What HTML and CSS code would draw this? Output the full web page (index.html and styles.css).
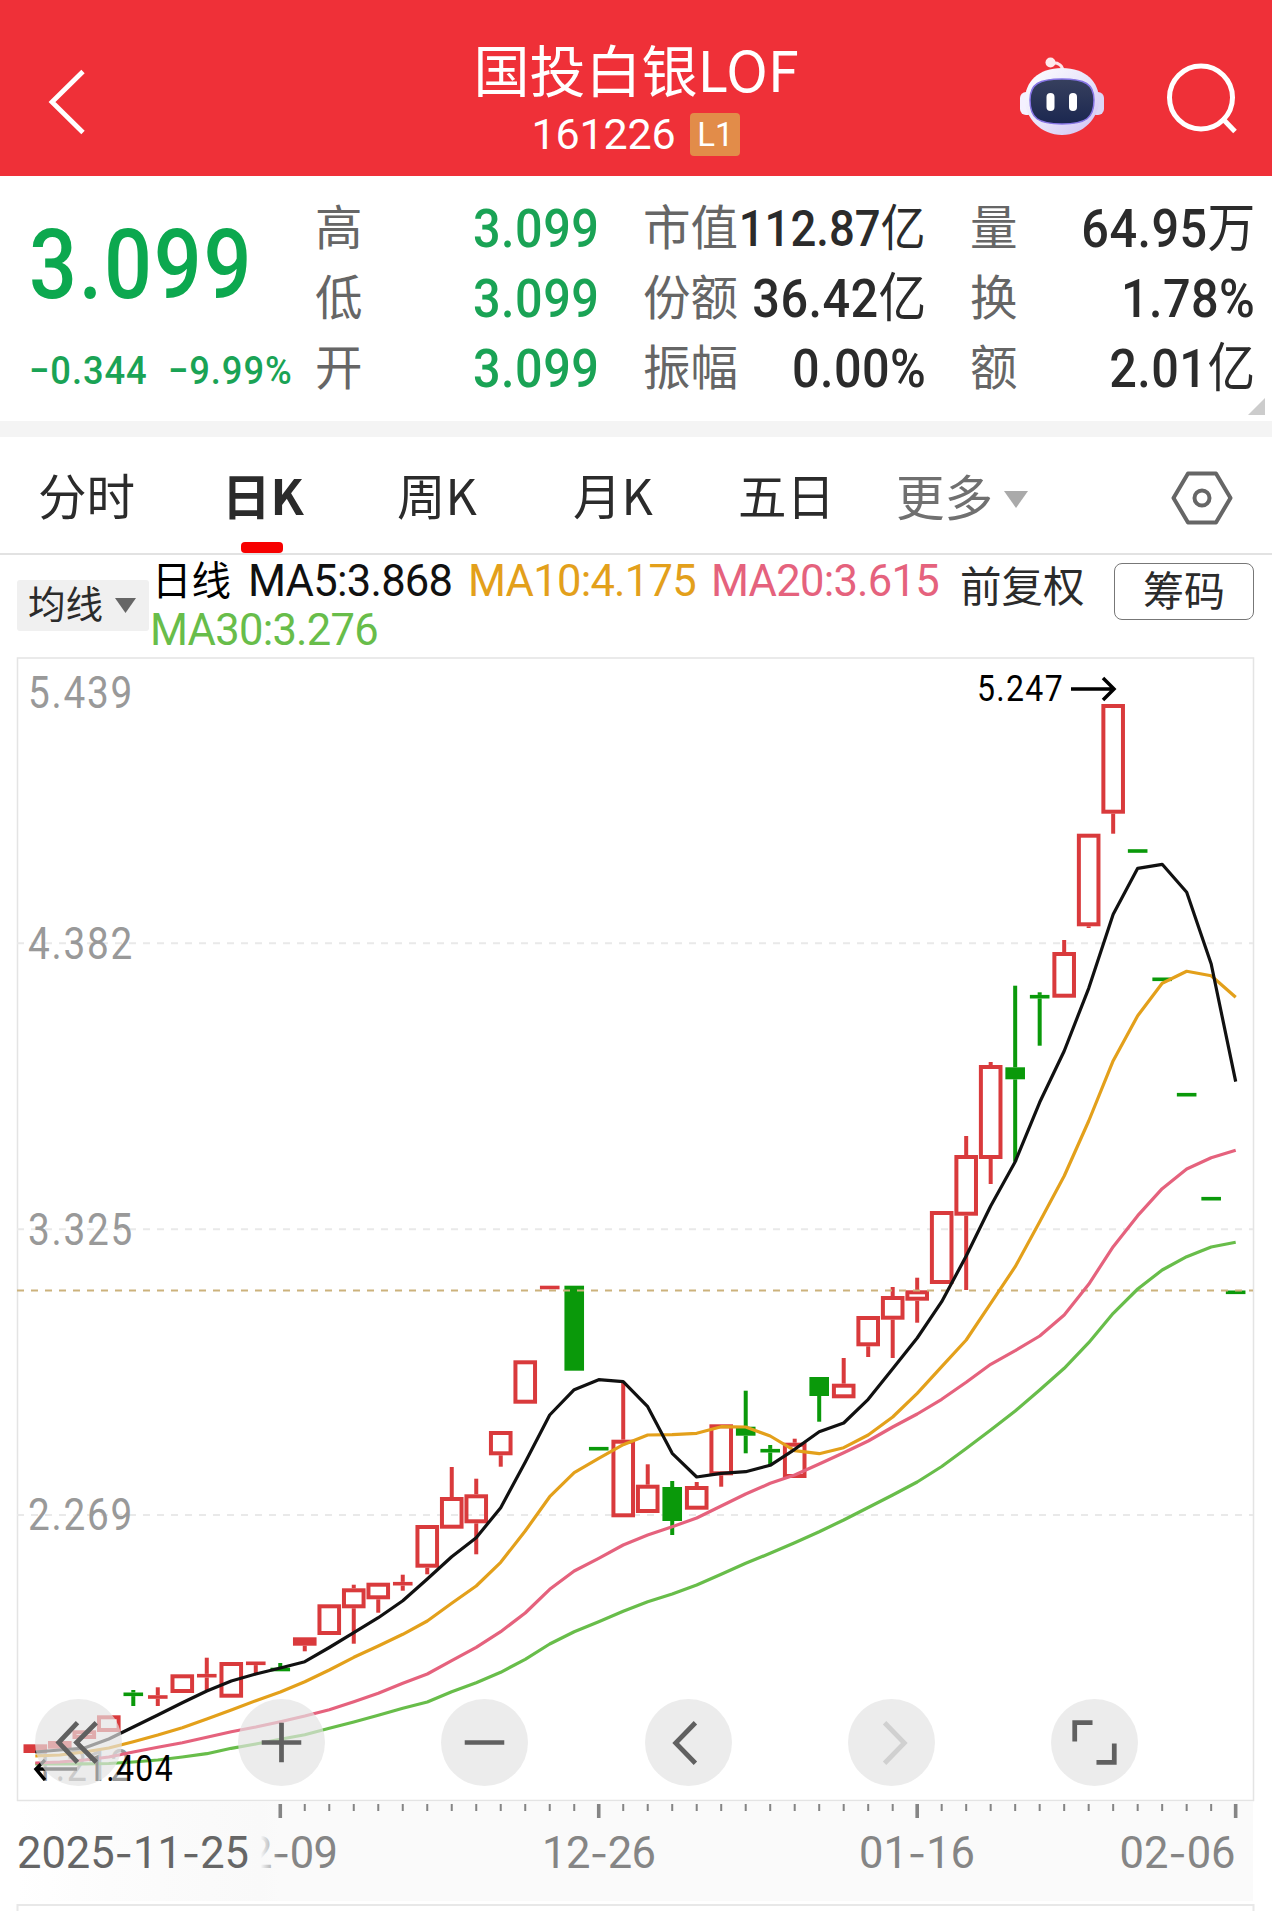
FILE: index.html
```html
<!DOCTYPE html>
<html lang="zh-CN">
<head>
<meta charset="utf-8">
<title>国投白银LOF 161226</title>
<link rel="stylesheet" href="styles.css">
</head>
<body>
<header class="header">
  <svg class="back" width="60" height="80" viewBox="0 0 60 80"><path d="M43 11.500 12 42 43 72.500" fill="none" stroke="#fff" stroke-width="4.800"/></svg>
  <div class="heading">
    <h1 class="title">国投白银LOF</h1>
    <div class="code-row"><span class="code">161226</span><span class="badge">L1</span></div>
  </div>
  <div class="header-icons">
    <svg width="88" height="84" viewBox="0 0 88 84">
      <defs>
        <linearGradient id="shell" x1="0" y1="0" x2="1" y2="1"><stop offset="0" stop-color="#fff"/><stop offset=".55" stop-color="#e6e2fa"/><stop offset="1" stop-color="#cfc0f4"/></linearGradient>
        <linearGradient id="visor" x1="0" y1="0" x2="0" y2="1"><stop offset="0" stop-color="#37405e"/><stop offset="1" stop-color="#1b2750"/></linearGradient>
      </defs>
      <path d="M33 9c8-1 12 3 12 9" fill="none" stroke="#ffe3e8" stroke-width="3"/>
      <circle cx="32.500" cy="8.500" r="5" fill="#ffe9ec"/>
      <rect x="2" y="38" width="14" height="23" rx="6" fill="#f4f1ff"/><rect x="72" y="38" width="14" height="23" rx="6" fill="#dcd6f6"/>
      <path d="M44 14c24 0 37 14 37 32S65 81 44 81 7 64 7 46s13-32 37-32z" fill="url(#shell)"/>
      <path d="M44 25c23 0 32 5 32 21 0 18-8 24-32 24S12 64 12 46c0-16 9-21 32-21z" fill="url(#visor)" stroke="#8775e6" stroke-width="1.500"/>
      <rect x="28.500" y="39" width="8" height="18" rx="4" fill="#fff"/><rect x="51" y="39" width="8" height="18" rx="4" fill="#fff"/>
    </svg>
    <svg width="76" height="76" viewBox="0 0 76 76"><circle cx="37" cy="35.500" r="31.500" fill="none" stroke="#fff" stroke-width="5"/><path d="M58 56l13 13.500" stroke="#fff" stroke-width="5"/></svg>
  </div>
</header>

<section class="quote">
  <div class="price-col">
    <div class="price">3.099</div>
    <div class="change"><span>−0.344</span><span>−9.99%</span></div>
  </div>
  <dl class="stats hi"><dt>高</dt><dd>3.099</dd><dt>低</dt><dd>3.099</dd><dt>开</dt><dd>3.099</dd></dl>
  <dl class="stats cap"><dt>市值</dt><dd class="tight">112.87<i>亿</i></dd><dt>份额</dt><dd>36.42<i>亿</i></dd><dt>振幅</dt><dd>0.00%</dd></dl>
  <dl class="stats vol"><dt>量</dt><dd>64.95<i>万</i></dd><dt>换</dt><dd>1.78%</dd><dt>额</dt><dd>2.01<i>亿</i></dd></dl>
  <svg class="corner" width="17" height="17" viewBox="0 0 17 17"><path d="M17 0v17H0z" fill="#ccc"/></svg>
</section>

<nav class="tabs">
  <span class="tab t1">分时</span>
  <span class="tab t2 active">日K</span>
  <span class="tab t3">周K</span>
  <span class="tab t4">月K</span>
  <span class="tab t5">五日</span>
  <span class="tab more">更多<svg width="24" height="17" viewBox="0 0 24 17"><path d="M0 0h24L12 17z" fill="#aaa"/></svg></span>
  <svg class="gear" width="62" height="56" viewBox="0 0 62 56"><path d="M17 3.500h28L59.500 28 45 52.500H17L2.500 28z" fill="none" stroke="#666" stroke-width="4" stroke-linejoin="round"/><circle cx="31" cy="28" r="7.500" fill="none" stroke="#666" stroke-width="4"/></svg>
</nav>

<section class="legend">
  <div class="ma-select">均线<svg width="21" height="15" viewBox="0 0 21 15"><path d="M0 0h21L10.500 15z" fill="#666"/></svg></div>
  <div class="ma-values">
    <span class="day">日线</span><span class="m5">MA5:3.868</span><span class="m10">MA10:4.175</span><span class="m20">MA20:3.615</span>
    <span class="m30">MA30:3.276</span>
  </div>
  <span class="adjust">前复权</span>
  <span class="chips">筹码</span>
</section>

<main class="chart">
  <svg width="1272" height="1254" viewBox="0 657 1272 1254">
    <defs>
      <linearGradient id="fade" x1="0" x2="1" y1="0" y2="0"><stop offset="0" stop-color="#fff"/><stop offset=".35" stop-color="#fcfcfc"/><stop offset=".93" stop-color="#f9f9f9"/><stop offset="1" stop-color="#f9f9f9" stop-opacity="0"/></linearGradient>
    </defs>
    <g fill="none" stroke="#e4e4e4" stroke-width="1.500">
      <path d="M17.500 1800.500V658h1236v1142.500z"/>
    </g>
    <g stroke="#e9e9e9" stroke-width="2" stroke-dasharray="7 7"><path d="M17 943.300H1253M17 1229.300H1253M17 1515H1253"/></g>
    <g class="axis-price">
      <text x="28" y="707.500" textLength="106" lengthAdjust="spacingAndGlyphs">5.439</text>
      <text x="28" y="958.500" textLength="106" lengthAdjust="spacingAndGlyphs">4.382</text>
      <text x="28" y="1244.500" textLength="106" lengthAdjust="spacingAndGlyphs">3.325</text>
      <text x="28" y="1529.500" textLength="106" lengthAdjust="spacingAndGlyphs">2.269</text>
      <text x="34" y="1781" textLength="98" lengthAdjust="spacingAndGlyphs">1.212</text>
    </g>
    <g id="candles"></g>
    <path d="M17 1290.500H1253" stroke="#ccb27c" stroke-width="2.200" stroke-dasharray="7 7"/>
    <g id="averages" fill="none" stroke-width="3.200" stroke-linejoin="round"></g>
    <g class="marks">
      <text x="977" y="701" textLength="87" lengthAdjust="spacingAndGlyphs">5.247</text>
      <path d="M1071 689h43M1103 678l11 11-11 11"/>
      <text x="87" y="1781" textLength="87" lengthAdjust="spacingAndGlyphs">1.404</text>
      <path d="M77 1769H36M45 1760l-9 9 9 11"/>
    </g>
    <rect x="17" y="1802" width="1236" height="99" fill="#fafafa"/>
    <g id="ticks" fill="#858585"></g>
    <g class="dates">
      <text x="224" y="1867.500" textLength="114">12<tspan class="dash">-</tspan>09</text>
      <text x="542" y="1867.500" textLength="114">12<tspan class="dash">-</tspan>26</text>
      <text x="859" y="1867.500" textLength="116">01<tspan class="dash">-</tspan>16</text>
      <text x="1119.500" y="1867.500" textLength="116">02<tspan class="dash">-</tspan>06</text>
      <rect x="17" y="1802" width="262" height="99" fill="url(#fade)"/>
      <text class="start" x="17" y="1867.500" textLength="232">2025<tspan class="dash">-</tspan>11<tspan class="dash">-</tspan>25</text>
    </g>
    <path d="M17.500 1911V1905H1253.500V1911" fill="none" stroke="#e8e8e8" stroke-width="2"/>
  </svg>
  <div class="controls">
    <span class="ctl"><svg viewBox="0 0 88 88"><path d="M43 24 24 44l19 20M62 24 42 44l20 20"/></svg></span>
    <span class="ctl"><svg viewBox="0 0 88 88"><path d="M24 44h40M44 24v40"/></svg></span>
    <span class="ctl"><svg viewBox="0 0 88 88"><path d="M24 44h40"/></svg></span>
    <span class="ctl"><svg viewBox="0 0 88 88"><path d="M51 24 31 44.500 51 65"/></svg></span>
    <span class="ctl off"><svg viewBox="0 0 88 88"><path d="M37 24 57 44.500 37 65"/></svg></span>
    <span class="ctl"><svg viewBox="0 0 88 88"><path d="M42 24H24v19M46 64h18V45"/></svg></span>
  </div>
</main>
<script src="chart.js"></script>
</body>
</html>
```
FILE: styles.css
```css
* { box-sizing: border-box; margin: 0; padding: 0; }
body { width: 1272px; background: #fff; font-family: Roboto, "Noto Sans CJK SC", sans-serif; color: #2b2b2b; overflow: hidden; }
svg { display: block; flex: none; }

.header { height: 176px; background: #ef3038; color: #fff; display: grid; grid-template-columns: 300px 1fr 300px; }
.back { margin: 60px 0 0 40px; }
.heading { display: flex; flex-direction: column; align-items: center; padding-top: 34px; }
.title { font: 400 56px/68px "Noto Sans CJK SC", sans-serif; white-space: nowrap; }
.code-row { display: flex; align-items: center; gap: 15px; margin-top: 10px; height: 44px; }
.code { font-size: 43px; line-height: 44px; letter-spacing: -.2px; }
.badge { width: 50px; height: 43px; border-radius: 4px; background: #e28c49; font-size: 33px; line-height: 43px; text-align: center; }
.header-icons { display: flex; padding-left: 46px; gap: 58px; }
.header-icons svg:first-child { margin-top: 54px; }
.header-icons svg:last-child { margin-top: 62px; }

.quote { position: relative; height: 245px; display: flex; padding: 18px 0 0 29px; }
.price-col { width: 286px; color: #0ca84f; font-weight: 500; }
.price { font-size: 96px; line-height: 110px; letter-spacing: 2px; margin-top: 16px; width: 250px; transform: scaleX(.88); transform-origin: left; }
.change { display: flex; gap: 22px; width: 290px; font-size: 39.500px; line-height: 46px; letter-spacing: 1px; margin-top: 28px; color: #1aa355; white-space: nowrap; transform: scaleX(.92); transform-origin: left; }
.stats { display: grid; grid-template-columns: auto minmax(0, 1fr); grid-auto-rows: 70px; align-items: center; line-height: 70px; white-space: nowrap; }
.stats dt { font-size: 47.500px; color: #666; }
.stats dd { justify-self: end; font-size: 54px; font-weight: 500; letter-spacing: .5px; transform: scaleX(.9); transform-origin: right; }
.stats dd i { font-style: normal; font-weight: 400; font-size: 53px; letter-spacing: 0; }
.stats .tight { font-size: 50.500px; letter-spacing: 0; }
.stats .tight i { font-size: 50px; }
.hi { width: 284px; }
.hi dd { color: #1aa355; }
.cap { width: 283px; margin-left: 44px; }
.vol { width: 285px; margin-left: 44px; }
.corner { position: absolute; right: 7px; bottom: 6px; }

.tabs { height: 134px; border-top: 16px solid #f4f4f4; border-bottom: 2px solid #e2e2e2; display: flex; align-items: center; font-size: 48.500px; line-height: 115px; padding-left: 38px; white-space: nowrap; font-family: "Noto Sans CJK SC", sans-serif; }
.tab { position: relative; height: 116px; }
.t1 { width: 184px; }
.t2 { width: 175px; }
.t3 { width: 176px; }
.t4 { width: 165px; }
.t5 { width: 158px; }
.active { font-weight: 700; }
.active::after { content: ""; position: absolute; left: 19px; bottom: 0; width: 42px; height: 11px; border-radius: 4px; background: #f70000; }
.more { color: #707070; display: flex; align-items: center; gap: 11px; width: 275px; }
.more svg { margin-top: 9px; }
.gear { margin-top: 6px; }

.legend { height: 102px; display: flex; padding-left: 17px; white-space: nowrap; }
.ma-select { width: 132px; height: 51px; margin-top: 25px; background: #f0f0f0; border-radius: 3px; display: flex; align-items: center; gap: 12px; padding-left: 11px; font-size: 37.500px; line-height: 51px; }
.ma-values { width: 811px; display: flex; flex-wrap: wrap; align-content: flex-start; font-size: 43.500px; line-height: 49px; letter-spacing: -.75px; padding: 2px 0 0 1px; }
.day { width: 98px; padding-left: 2px; font-size: 39.500px; letter-spacing: 0; color: #000; }
.m5 { width: 220px; color: #111; }
.m10 { width: 243px; color: #e3a01b; }
.m20 { width: 232px; color: #e5627d; }
.m30 { color: #68bd4a; }
.adjust { width: 154px; font-size: 41.500px; line-height: 66px; }
.chips { width: 140px; height: 57px; margin-top: 8px; border: 1.500px solid #777; border-radius: 8px; text-align: center; font-size: 41px; line-height: 56px; }

.chart { position: relative; height: 1254px; }
.chart text { font-family: Roboto, sans-serif; }
.axis-price text { font-size: 44.500px; letter-spacing: 2px; fill: #999; }
.marks text { font-size: 36.500px; letter-spacing: 1.500px; fill: #000; }
.marks path { fill: none; stroke: #000; stroke-width: 3.500; }
.dates text { font-size: 43.500px; fill: #858585; }
.dates .start { fill: #666; }
.dates .dash { font-family: Inter, sans-serif; font-size: 40px; }
.controls { position: absolute; left: 35px; top: 1042px; width: 1103px; display: flex; justify-content: space-between; }
.ctl { width: 87px; height: 87px; border-radius: 50%; background: rgba(227, 227, 227, .68); }
.ctl path { fill: none; stroke: #606060; stroke-width: 4.800; }
.off path { stroke: #d0d0d0; }
```
FILE: chart.js
```js
const NS = 'http://www.w3.org/2000/svg';
const STEP = 24.497;
const xAt = i => 35.3 + STEP * i;
const add = (id, name, attrs) => {
  const el = document.createElementNS(NS, name);
  for (const k in attrs) el.setAttribute(k, attrs[k]);
  document.getElementById(id).appendChild(el);
};

// kind (r: hollow up, s: solid up, l: flat up, g: down, d: flat down), body top, body bottom, high, low
const candles = [
  ['s',1744.3,1753],['s',1741,1748.7],['r',1730.3,1739],['r',1715.3,1732],
  ['d',1694.3,0,1690,1706],['l',1697,0,1687.3,1706],['r',1674.3,1693],['l',1675.7,0,1657.7,1690],
  ['r',1662,1697.7],['l',1663.3,0,1663,1674],['d',1669.5,0,1663,1671],['s',1637.3,1645.7,0,1651.3],
  ['r',1604.3,1635],['r',1588.3,1608.3,1584.7,1643.7],['r',1582.7,1599.3,0,1612.7],['l',1583.7,0,1574.7,1590.7],
  ['r',1525,1567.7,0,1574.3],['r',1497,1528.7,1467],['r',1494.3,1523.3,1478.7,1554.3],['r',1431,1455.3,0,1466.7],
  ['r',1360.3,1403.7],['l',1287.5],['g',1285.7,1370.7],['d',1448.7],
  ['r',1439.7,1517.3,1381.7],['r',1484.7,1513,1464.3],['g',1487,1521,1481,1535],['r',1486,1509.7,1482],
  ['r',1424.3,1475.3,0,1486.7],['g',1426.7,1435.7,1390.7,1453.3],['d',1450.7,0,1445,1465],['r',1442.7,1478,1438.7],
  ['g',1377,1396,0,1421.7],['r',1383.7,1398.3,1358],['r',1316,1346.3,0,1357],['r',1296,1319.7,1287,1358],
  ['r',1290.3,1300.7,1277.7,1322.7],['r',1211,1284],['r',1155,1215.7,1136,1290],['r',1065,1159,1062,1184],
  ['g',1067.3,1079.3,985.7,1161.7],['d',996.7,0,992.3,1045.7],['r',952,997.7,940],['r',833.7,926.3,0,928],
  ['r',704,813.7,0,833.7],['d',851],['d',979.3],['d',1094.7],['d',1198.7],['d',1292.3]
];
candles.forEach(([kind, top, bottom, high, low], i) => {
  const x = xAt(i), down = kind === 'g' || kind === 'd', color = down ? '#0a990a' : '#d93a3c';
  const flat = kind === 'l' || kind === 'd';
  const t = flat ? top - 1.8 : top, b = flat ? top + 1.8 : bottom;
  const wick = (y1, y2) => add('candles', 'rect', {x: x - 2, y: y1, width: 4, height: y2 - y1, fill: color});
  if (high && high < t) wick(high, t);
  if (low && low > b) wick(b, low);
  if (kind === 'r') add('candles', 'rect', {x: x - 9.8, y: t + 2, width: 19.6, height: b - t - 4, fill: 'none', stroke: color, 'stroke-width': 4});
  else {
    const w = kind === 's' ? 23.6 : 19.6;
    add('candles', 'rect', {x: x - w / 2, y: t, width: w, height: b - t, fill: color});
  }
});

const averages = {
  '#68bd4a': [1764,1764,1763.8,1763.5,1762,1760,1757,1753.7,1748.3,1744,1739.3,1734.7,1728.3,1722,1715.3,1708.3,1702,1691.7,1682.7,1672.3,1659.3,1644,1631.7,1621.7,1611.3,1601.7,1594,1585,1574.3,1563.3,1553.3,1542.7,1531.7,1520,1507.5,1495,1482,1466.5,1448.5,1430,1411,1390,1368.3,1342.7,1313.3,1289,1270,1256.7,1247,1242.3],
  '#e5627d': [1763,1762,1760,1757,1752,1747.3,1742.7,1737.3,1731.7,1727,1721.7,1716,1709.7,1701.7,1693.3,1683.3,1674,1660.7,1647.3,1631.7,1613,1589.3,1571,1558.3,1545,1535,1526.7,1518,1506,1494,1483.3,1475,1464,1452.7,1441,1427,1414,1399.3,1382.3,1364.3,1350.7,1336,1315,1284.3,1246.7,1215.7,1188.7,1169,1157.7,1150.3],
  '#e3a01b': [1756,1755,1752,1748,1741.7,1735,1727.7,1719,1710,1700.7,1692,1681.7,1670,1657.3,1646,1634.3,1621,1603.3,1586,1562.3,1531,1496.7,1472.7,1458.3,1444.7,1435,1434.7,1433.3,1426.7,1427,1436,1450.7,1453.7,1447.7,1435,1417,1393.3,1366.7,1340,1303.3,1266.7,1221.7,1176,1121,1060.7,1015.7,983.3,971.3,975.7,997.3],
  '#111': [1752,1750,1748,1739,1727,1715,1702.7,1691,1681,1674,1668,1661.7,1647.5,1632.7,1617.7,1600.7,1579,1556.7,1537.7,1507.7,1462.3,1415,1389.7,1379.7,1381.7,1406.7,1453.3,1477,1473.3,1471.7,1465.3,1449.3,1431.7,1423,1399.3,1368.7,1338,1301.7,1256,1206,1161.7,1102.3,1051,988.3,914.3,868.3,864.3,892.3,964,1081.7]
};
for (const color in averages) {
  add('averages', 'polyline', {stroke: color, points: averages[color].map((y, i) => xAt(i).toFixed(1) + ',' + y).join(' ')});
}

candles.forEach((_, i) => {
  const major = [10, 23, 36, 49].includes(i), w = major ? 3.6 : 2;
  if (i >= 10) add('ticks', 'rect', {x: xAt(i) - w / 2, y: 1804, width: w, height: major ? 14 : 7});
});
```
